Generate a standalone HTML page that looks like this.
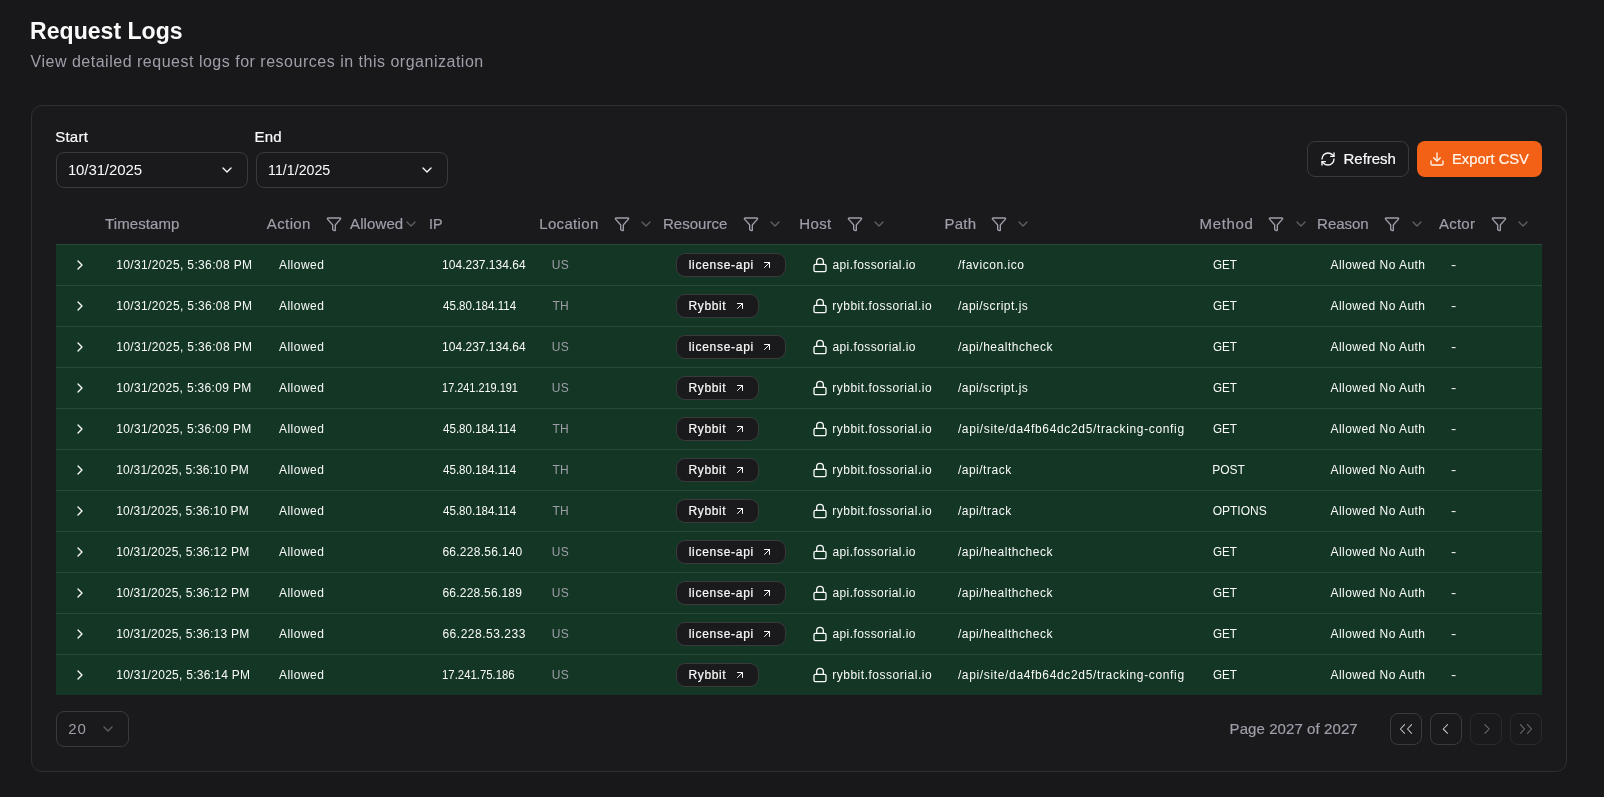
<!DOCTYPE html>
<html><head><meta charset="utf-8"><title>Request Logs</title>
<style>
html,body{margin:0;padding:0;}
body{width:1604px;height:797px;overflow:hidden;background:#18181b;position:relative;font-family:"Liberation Sans",sans-serif;}
.t{position:absolute;white-space:nowrap;}
.med{-webkit-text-stroke:0.2px currentColor;}
.layer{position:absolute;left:0;top:0;width:1604px;height:797px;will-change:transform;}
.ic{position:absolute;overflow:visible;}
.card{position:absolute;left:31px;top:105px;width:1534px;height:665px;border:1px solid #2f2f32;border-radius:11px;background:#1a1a1d;}
.inp{position:absolute;top:152px;width:190px;height:34px;border:1px solid #3a3a3d;border-radius:8px;}
.btn{position:absolute;top:141px;height:34px;border-radius:8px;}
.row{position:absolute;left:56px;width:1486px;height:40px;background:#133625;border-top:1px solid #284a38;}
.badge{position:absolute;box-sizing:border-box;height:24px;background:#1a1a1d;border:1px solid #3a3a3c;border-radius:9px;}
.pbtn{position:absolute;top:713px;width:30px;height:30px;border:1px solid #3a3a3d;border-radius:8px;}
</style></head><body><div class="layer">
<div class="card"></div>
<div class="inp" style="left:56px"></div>
<div class="inp" style="left:256px"></div>
<div class="btn" style="left:1307px;width:100px;border:1px solid #3a3a3d;"></div>
<div class="btn" style="left:1417px;width:125px;height:36px;background:#f36117;"></div>
<div class="row" style="top:244px"></div><div class="badge" style="left:676px;top:253px;width:110px"></div><div class="row" style="top:285px"></div><div class="badge" style="left:676px;top:294px;width:83px"></div><div class="row" style="top:326px"></div><div class="badge" style="left:676px;top:335px;width:110px"></div><div class="row" style="top:367px"></div><div class="badge" style="left:676px;top:376px;width:83px"></div><div class="row" style="top:408px"></div><div class="badge" style="left:676px;top:417px;width:83px"></div><div class="row" style="top:449px"></div><div class="badge" style="left:676px;top:458px;width:83px"></div><div class="row" style="top:490px"></div><div class="badge" style="left:676px;top:499px;width:83px"></div><div class="row" style="top:531px"></div><div class="badge" style="left:676px;top:540px;width:110px"></div><div class="row" style="top:572px"></div><div class="badge" style="left:676px;top:581px;width:110px"></div><div class="row" style="top:613px"></div><div class="badge" style="left:676px;top:622px;width:110px"></div><div class="row" style="top:654px"></div><div class="badge" style="left:676px;top:663px;width:83px"></div>
<div class="pbtn" style="left:56px;width:71px;height:34px;top:711px"></div>
<div class="pbtn" style="left:1390px;opacity:1"></div><div class="pbtn" style="left:1430px;opacity:1"></div><div class="pbtn" style="left:1470px;opacity:0.5"></div><div class="pbtn" style="left:1510px;opacity:0.5"></div>
<span class="t " style="left:30.25px;top:17px;font-size:24px;line-height:27px;letter-spacing:0.000px;color:#fafafa;font-weight:700;transform:scaleX(0.9612);transform-origin:1.55px 0;">Request Logs</span><span class="t " style="left:30.57px;top:53px;font-size:16px;line-height:17px;letter-spacing:0.508px;color:#9f9fa9;">View detailed request logs for resources in this organization</span><span class="t med " style="left:55.14px;top:128px;font-size:15px;line-height:17px;letter-spacing:0.281px;color:#fafafa;">Start</span><span class="t med " style="left:254.40px;top:128px;font-size:15px;line-height:17px;letter-spacing:0.278px;color:#fafafa;">End</span><span class="t " style="left:67.88px;top:161px;font-size:15px;line-height:17px;letter-spacing:-0.108px;color:#fafafa;">10/31/2025</span><span class="t " style="left:267.58px;top:161px;font-size:15px;line-height:17px;letter-spacing:0.000px;color:#fafafa;transform:scaleX(0.9480);transform-origin:1.12px 0;">11/1/2025</span><span class="t med " style="left:1343.50px;top:150px;font-size:15px;line-height:17px;letter-spacing:-0.012px;color:#fafafa;">Refresh</span><span class="t med " style="left:1452.20px;top:150px;font-size:15px;line-height:17px;letter-spacing:0.000px;color:#fff7ed;transform:scaleX(0.9811);transform-origin:1.20px 0;">Export CSV</span><span class="t med " style="left:105.00px;top:215px;font-size:15px;line-height:17px;letter-spacing:0.096px;color:#9f9fa9;">Timestamp</span><span class="t med " style="left:266.80px;top:215px;font-size:15px;line-height:17px;letter-spacing:0.386px;color:#9f9fa9;">Action</span><span class="t med " style="left:350.10px;top:215px;font-size:15px;line-height:17px;letter-spacing:0.093px;color:#9f9fa9;">Allowed</span><span class="t med " style="left:429.46px;top:215px;font-size:15px;line-height:17px;letter-spacing:0.000px;color:#9f9fa9;transform:scaleX(0.9595);transform-origin:1.34px 0;">IP</span><span class="t med " style="left:539.20px;top:215px;font-size:15px;line-height:17px;letter-spacing:0.346px;color:#9f9fa9;">Location</span><span class="t med " style="left:663.00px;top:215px;font-size:15px;line-height:17px;letter-spacing:0.008px;color:#9f9fa9;">Resource</span><span class="t med " style="left:799.30px;top:215px;font-size:15px;line-height:17px;letter-spacing:0.344px;color:#9f9fa9;">Host</span><span class="t med " style="left:944.60px;top:215px;font-size:15px;line-height:17px;letter-spacing:0.201px;color:#9f9fa9;">Path</span><span class="t med " style="left:1199.60px;top:215px;font-size:15px;line-height:17px;letter-spacing:0.653px;color:#9f9fa9;">Method</span><span class="t med " style="left:1317.10px;top:215px;font-size:15px;line-height:17px;letter-spacing:-0.035px;color:#9f9fa9;">Reason</span><span class="t med " style="left:1438.90px;top:215px;font-size:15px;line-height:17px;letter-spacing:0.255px;color:#9f9fa9;">Actor</span><span class="t med " style="left:1229.60px;top:720px;font-size:15px;line-height:17px;letter-spacing:0.079px;color:#9f9fa9;">Page 2027 of 2027</span><span class="t " style="left:68.31px;top:720px;font-size:15px;line-height:17px;letter-spacing:0.825px;color:#9f9fa9;">20</span>
<span class="t " style="left:116.22px;top:258px;font-size:12px;line-height:14px;letter-spacing:0.366px;color:#fafafa;">10/31/2025, 5:36:08 PM</span><span class="t " style="left:278.92px;top:258px;font-size:12px;line-height:14px;letter-spacing:0.503px;color:#fafafa;">Allowed</span><span class="t " style="left:442.12px;top:258px;font-size:12px;line-height:14px;letter-spacing:0.005px;color:#fafafa;">104.237.134.64</span><span class="t " style="left:551.82px;top:258px;font-size:12px;line-height:14px;letter-spacing:0.278px;color:#9f9fa9;">US</span><span class="t med " style="left:688.74px;top:258px;font-size:12px;line-height:14px;letter-spacing:0.709px;color:#fafafa;">license-api</span><span class="t " style="left:832.40px;top:258px;font-size:12px;line-height:14px;letter-spacing:0.421px;color:#fafafa;">api.fossorial.io</span><span class="t " style="left:957.89px;top:258px;font-size:12px;line-height:14px;letter-spacing:0.550px;color:#fafafa;">/favicon.ico</span><span class="t " style="left:1212.62px;top:258px;font-size:12px;line-height:14px;letter-spacing:0.000px;color:#fafafa;transform:scaleX(0.9706);transform-origin:0.58px 0;">GET</span><span class="t " style="left:1330.52px;top:258px;font-size:12px;line-height:14px;letter-spacing:0.459px;color:#fafafa;">Allowed No Auth</span><span class="t " style="left:1451.49px;top:258px;font-size:12px;line-height:14px;letter-spacing:0.000px;color:#fafafa;transform:scaleX(1.3);transform-origin:0 0;">-</span><span class="t " style="left:116.22px;top:299px;font-size:12px;line-height:14px;letter-spacing:0.366px;color:#fafafa;">10/31/2025, 5:36:08 PM</span><span class="t " style="left:278.92px;top:299px;font-size:12px;line-height:14px;letter-spacing:0.503px;color:#fafafa;">Allowed</span><span class="t " style="left:442.76px;top:299px;font-size:12px;line-height:14px;letter-spacing:0.000px;color:#fafafa;transform:scaleX(0.9643);transform-origin:0.24px 0;">45.80.184.114</span><span class="t " style="left:552.47px;top:299px;font-size:12px;line-height:14px;letter-spacing:0.278px;color:#9f9fa9;">TH</span><span class="t med " style="left:688.50px;top:299px;font-size:12px;line-height:14px;letter-spacing:0.624px;color:#fafafa;">Rybbit</span><span class="t " style="left:832.14px;top:299px;font-size:12px;line-height:14px;letter-spacing:0.528px;color:#fafafa;">rybbit.fossorial.io</span><span class="t " style="left:957.89px;top:299px;font-size:12px;line-height:14px;letter-spacing:0.511px;color:#fafafa;">/api/script.js</span><span class="t " style="left:1212.62px;top:299px;font-size:12px;line-height:14px;letter-spacing:0.000px;color:#fafafa;transform:scaleX(0.9706);transform-origin:0.58px 0;">GET</span><span class="t " style="left:1330.52px;top:299px;font-size:12px;line-height:14px;letter-spacing:0.459px;color:#fafafa;">Allowed No Auth</span><span class="t " style="left:1451.49px;top:299px;font-size:12px;line-height:14px;letter-spacing:0.000px;color:#fafafa;transform:scaleX(1.3);transform-origin:0 0;">-</span><span class="t " style="left:116.22px;top:340px;font-size:12px;line-height:14px;letter-spacing:0.366px;color:#fafafa;">10/31/2025, 5:36:08 PM</span><span class="t " style="left:278.92px;top:340px;font-size:12px;line-height:14px;letter-spacing:0.503px;color:#fafafa;">Allowed</span><span class="t " style="left:442.12px;top:340px;font-size:12px;line-height:14px;letter-spacing:0.005px;color:#fafafa;">104.237.134.64</span><span class="t " style="left:551.82px;top:340px;font-size:12px;line-height:14px;letter-spacing:0.278px;color:#9f9fa9;">US</span><span class="t med " style="left:688.74px;top:340px;font-size:12px;line-height:14px;letter-spacing:0.709px;color:#fafafa;">license-api</span><span class="t " style="left:832.40px;top:340px;font-size:12px;line-height:14px;letter-spacing:0.421px;color:#fafafa;">api.fossorial.io</span><span class="t " style="left:957.89px;top:340px;font-size:12px;line-height:14px;letter-spacing:0.521px;color:#fafafa;">/api/healthcheck</span><span class="t " style="left:1212.62px;top:340px;font-size:12px;line-height:14px;letter-spacing:0.000px;color:#fafafa;transform:scaleX(0.9706);transform-origin:0.58px 0;">GET</span><span class="t " style="left:1330.52px;top:340px;font-size:12px;line-height:14px;letter-spacing:0.459px;color:#fafafa;">Allowed No Auth</span><span class="t " style="left:1451.49px;top:340px;font-size:12px;line-height:14px;letter-spacing:0.000px;color:#fafafa;transform:scaleX(1.3);transform-origin:0 0;">-</span><span class="t " style="left:116.22px;top:381px;font-size:12px;line-height:14px;letter-spacing:0.328px;color:#fafafa;">10/31/2025, 5:36:09 PM</span><span class="t " style="left:278.92px;top:381px;font-size:12px;line-height:14px;letter-spacing:0.503px;color:#fafafa;">Allowed</span><span class="t " style="left:442.12px;top:381px;font-size:12px;line-height:14px;letter-spacing:0.000px;color:#fafafa;transform:scaleX(0.9087);transform-origin:0.88px 0;">17.241.219.191</span><span class="t " style="left:551.82px;top:381px;font-size:12px;line-height:14px;letter-spacing:0.278px;color:#9f9fa9;">US</span><span class="t med " style="left:688.50px;top:381px;font-size:12px;line-height:14px;letter-spacing:0.624px;color:#fafafa;">Rybbit</span><span class="t " style="left:832.14px;top:381px;font-size:12px;line-height:14px;letter-spacing:0.528px;color:#fafafa;">rybbit.fossorial.io</span><span class="t " style="left:957.89px;top:381px;font-size:12px;line-height:14px;letter-spacing:0.511px;color:#fafafa;">/api/script.js</span><span class="t " style="left:1212.62px;top:381px;font-size:12px;line-height:14px;letter-spacing:0.000px;color:#fafafa;transform:scaleX(0.9706);transform-origin:0.58px 0;">GET</span><span class="t " style="left:1330.52px;top:381px;font-size:12px;line-height:14px;letter-spacing:0.459px;color:#fafafa;">Allowed No Auth</span><span class="t " style="left:1451.49px;top:381px;font-size:12px;line-height:14px;letter-spacing:0.000px;color:#fafafa;transform:scaleX(1.3);transform-origin:0 0;">-</span><span class="t " style="left:116.22px;top:422px;font-size:12px;line-height:14px;letter-spacing:0.328px;color:#fafafa;">10/31/2025, 5:36:09 PM</span><span class="t " style="left:278.92px;top:422px;font-size:12px;line-height:14px;letter-spacing:0.503px;color:#fafafa;">Allowed</span><span class="t " style="left:442.76px;top:422px;font-size:12px;line-height:14px;letter-spacing:0.000px;color:#fafafa;transform:scaleX(0.9643);transform-origin:0.24px 0;">45.80.184.114</span><span class="t " style="left:552.47px;top:422px;font-size:12px;line-height:14px;letter-spacing:0.278px;color:#9f9fa9;">TH</span><span class="t med " style="left:688.50px;top:422px;font-size:12px;line-height:14px;letter-spacing:0.624px;color:#fafafa;">Rybbit</span><span class="t " style="left:832.14px;top:422px;font-size:12px;line-height:14px;letter-spacing:0.528px;color:#fafafa;">rybbit.fossorial.io</span><span class="t " style="left:957.89px;top:422px;font-size:12px;line-height:14px;letter-spacing:0.651px;color:#fafafa;">/api/site/da4fb64dc2d5/tracking-config</span><span class="t " style="left:1212.62px;top:422px;font-size:12px;line-height:14px;letter-spacing:0.000px;color:#fafafa;transform:scaleX(0.9706);transform-origin:0.58px 0;">GET</span><span class="t " style="left:1330.52px;top:422px;font-size:12px;line-height:14px;letter-spacing:0.459px;color:#fafafa;">Allowed No Auth</span><span class="t " style="left:1451.49px;top:422px;font-size:12px;line-height:14px;letter-spacing:0.000px;color:#fafafa;transform:scaleX(1.3);transform-origin:0 0;">-</span><span class="t " style="left:116.22px;top:463px;font-size:12px;line-height:14px;letter-spacing:0.213px;color:#fafafa;">10/31/2025, 5:36:10 PM</span><span class="t " style="left:278.92px;top:463px;font-size:12px;line-height:14px;letter-spacing:0.503px;color:#fafafa;">Allowed</span><span class="t " style="left:442.76px;top:463px;font-size:12px;line-height:14px;letter-spacing:0.000px;color:#fafafa;transform:scaleX(0.9643);transform-origin:0.24px 0;">45.80.184.114</span><span class="t " style="left:552.47px;top:463px;font-size:12px;line-height:14px;letter-spacing:0.278px;color:#9f9fa9;">TH</span><span class="t med " style="left:688.50px;top:463px;font-size:12px;line-height:14px;letter-spacing:0.624px;color:#fafafa;">Rybbit</span><span class="t " style="left:832.14px;top:463px;font-size:12px;line-height:14px;letter-spacing:0.528px;color:#fafafa;">rybbit.fossorial.io</span><span class="t " style="left:957.89px;top:463px;font-size:12px;line-height:14px;letter-spacing:0.513px;color:#fafafa;">/api/track</span><span class="t " style="left:1212.20px;top:463px;font-size:12px;line-height:14px;letter-spacing:0.008px;color:#fafafa;">POST</span><span class="t " style="left:1330.52px;top:463px;font-size:12px;line-height:14px;letter-spacing:0.459px;color:#fafafa;">Allowed No Auth</span><span class="t " style="left:1451.49px;top:463px;font-size:12px;line-height:14px;letter-spacing:0.000px;color:#fafafa;transform:scaleX(1.3);transform-origin:0 0;">-</span><span class="t " style="left:116.22px;top:504px;font-size:12px;line-height:14px;letter-spacing:0.213px;color:#fafafa;">10/31/2025, 5:36:10 PM</span><span class="t " style="left:278.92px;top:504px;font-size:12px;line-height:14px;letter-spacing:0.503px;color:#fafafa;">Allowed</span><span class="t " style="left:442.76px;top:504px;font-size:12px;line-height:14px;letter-spacing:0.000px;color:#fafafa;transform:scaleX(0.9643);transform-origin:0.24px 0;">45.80.184.114</span><span class="t " style="left:552.47px;top:504px;font-size:12px;line-height:14px;letter-spacing:0.278px;color:#9f9fa9;">TH</span><span class="t med " style="left:688.50px;top:504px;font-size:12px;line-height:14px;letter-spacing:0.624px;color:#fafafa;">Rybbit</span><span class="t " style="left:832.14px;top:504px;font-size:12px;line-height:14px;letter-spacing:0.528px;color:#fafafa;">rybbit.fossorial.io</span><span class="t " style="left:957.89px;top:504px;font-size:12px;line-height:14px;letter-spacing:0.513px;color:#fafafa;">/api/track</span><span class="t " style="left:1212.67px;top:504px;font-size:12px;line-height:14px;letter-spacing:0.010px;color:#fafafa;">OPTIONS</span><span class="t " style="left:1330.52px;top:504px;font-size:12px;line-height:14px;letter-spacing:0.459px;color:#fafafa;">Allowed No Auth</span><span class="t " style="left:1451.49px;top:504px;font-size:12px;line-height:14px;letter-spacing:0.000px;color:#fafafa;transform:scaleX(1.3);transform-origin:0 0;">-</span><span class="t " style="left:116.22px;top:545px;font-size:12px;line-height:14px;letter-spacing:0.232px;color:#fafafa;">10/31/2025, 5:36:12 PM</span><span class="t " style="left:278.92px;top:545px;font-size:12px;line-height:14px;letter-spacing:0.503px;color:#fafafa;">Allowed</span><span class="t " style="left:442.42px;top:545px;font-size:12px;line-height:14px;letter-spacing:0.262px;color:#fafafa;">66.228.56.140</span><span class="t " style="left:551.82px;top:545px;font-size:12px;line-height:14px;letter-spacing:0.278px;color:#9f9fa9;">US</span><span class="t med " style="left:688.74px;top:545px;font-size:12px;line-height:14px;letter-spacing:0.709px;color:#fafafa;">license-api</span><span class="t " style="left:832.40px;top:545px;font-size:12px;line-height:14px;letter-spacing:0.421px;color:#fafafa;">api.fossorial.io</span><span class="t " style="left:957.89px;top:545px;font-size:12px;line-height:14px;letter-spacing:0.521px;color:#fafafa;">/api/healthcheck</span><span class="t " style="left:1212.62px;top:545px;font-size:12px;line-height:14px;letter-spacing:0.000px;color:#fafafa;transform:scaleX(0.9706);transform-origin:0.58px 0;">GET</span><span class="t " style="left:1330.52px;top:545px;font-size:12px;line-height:14px;letter-spacing:0.459px;color:#fafafa;">Allowed No Auth</span><span class="t " style="left:1451.49px;top:545px;font-size:12px;line-height:14px;letter-spacing:0.000px;color:#fafafa;transform:scaleX(1.3);transform-origin:0 0;">-</span><span class="t " style="left:116.22px;top:586px;font-size:12px;line-height:14px;letter-spacing:0.232px;color:#fafafa;">10/31/2025, 5:36:12 PM</span><span class="t " style="left:278.92px;top:586px;font-size:12px;line-height:14px;letter-spacing:0.503px;color:#fafafa;">Allowed</span><span class="t " style="left:442.42px;top:586px;font-size:12px;line-height:14px;letter-spacing:0.232px;color:#fafafa;">66.228.56.189</span><span class="t " style="left:551.82px;top:586px;font-size:12px;line-height:14px;letter-spacing:0.278px;color:#9f9fa9;">US</span><span class="t med " style="left:688.74px;top:586px;font-size:12px;line-height:14px;letter-spacing:0.709px;color:#fafafa;">license-api</span><span class="t " style="left:832.40px;top:586px;font-size:12px;line-height:14px;letter-spacing:0.421px;color:#fafafa;">api.fossorial.io</span><span class="t " style="left:957.89px;top:586px;font-size:12px;line-height:14px;letter-spacing:0.521px;color:#fafafa;">/api/healthcheck</span><span class="t " style="left:1212.62px;top:586px;font-size:12px;line-height:14px;letter-spacing:0.000px;color:#fafafa;transform:scaleX(0.9706);transform-origin:0.58px 0;">GET</span><span class="t " style="left:1330.52px;top:586px;font-size:12px;line-height:14px;letter-spacing:0.459px;color:#fafafa;">Allowed No Auth</span><span class="t " style="left:1451.49px;top:586px;font-size:12px;line-height:14px;letter-spacing:0.000px;color:#fafafa;transform:scaleX(1.3);transform-origin:0 0;">-</span><span class="t " style="left:116.22px;top:627px;font-size:12px;line-height:14px;letter-spacing:0.232px;color:#fafafa;">10/31/2025, 5:36:13 PM</span><span class="t " style="left:278.92px;top:627px;font-size:12px;line-height:14px;letter-spacing:0.503px;color:#fafafa;">Allowed</span><span class="t " style="left:442.42px;top:627px;font-size:12px;line-height:14px;letter-spacing:0.513px;color:#fafafa;">66.228.53.233</span><span class="t " style="left:551.82px;top:627px;font-size:12px;line-height:14px;letter-spacing:0.278px;color:#9f9fa9;">US</span><span class="t med " style="left:688.74px;top:627px;font-size:12px;line-height:14px;letter-spacing:0.709px;color:#fafafa;">license-api</span><span class="t " style="left:832.40px;top:627px;font-size:12px;line-height:14px;letter-spacing:0.421px;color:#fafafa;">api.fossorial.io</span><span class="t " style="left:957.89px;top:627px;font-size:12px;line-height:14px;letter-spacing:0.521px;color:#fafafa;">/api/healthcheck</span><span class="t " style="left:1212.62px;top:627px;font-size:12px;line-height:14px;letter-spacing:0.000px;color:#fafafa;transform:scaleX(0.9706);transform-origin:0.58px 0;">GET</span><span class="t " style="left:1330.52px;top:627px;font-size:12px;line-height:14px;letter-spacing:0.459px;color:#fafafa;">Allowed No Auth</span><span class="t " style="left:1451.49px;top:627px;font-size:12px;line-height:14px;letter-spacing:0.000px;color:#fafafa;transform:scaleX(1.3);transform-origin:0 0;">-</span><span class="t " style="left:116.22px;top:668px;font-size:12px;line-height:14px;letter-spacing:0.275px;color:#fafafa;">10/31/2025, 5:36:14 PM</span><span class="t " style="left:278.92px;top:668px;font-size:12px;line-height:14px;letter-spacing:0.503px;color:#fafafa;">Allowed</span><span class="t " style="left:442.12px;top:668px;font-size:12px;line-height:14px;letter-spacing:0.000px;color:#fafafa;transform:scaleX(0.9453);transform-origin:0.88px 0;">17.241.75.186</span><span class="t " style="left:551.82px;top:668px;font-size:12px;line-height:14px;letter-spacing:0.278px;color:#9f9fa9;">US</span><span class="t med " style="left:688.50px;top:668px;font-size:12px;line-height:14px;letter-spacing:0.624px;color:#fafafa;">Rybbit</span><span class="t " style="left:832.14px;top:668px;font-size:12px;line-height:14px;letter-spacing:0.528px;color:#fafafa;">rybbit.fossorial.io</span><span class="t " style="left:957.89px;top:668px;font-size:12px;line-height:14px;letter-spacing:0.651px;color:#fafafa;">/api/site/da4fb64dc2d5/tracking-config</span><span class="t " style="left:1212.62px;top:668px;font-size:12px;line-height:14px;letter-spacing:0.000px;color:#fafafa;transform:scaleX(0.9706);transform-origin:0.58px 0;">GET</span><span class="t " style="left:1330.52px;top:668px;font-size:12px;line-height:14px;letter-spacing:0.459px;color:#fafafa;">Allowed No Auth</span><span class="t " style="left:1451.49px;top:668px;font-size:12px;line-height:14px;letter-spacing:0.000px;color:#fafafa;transform:scaleX(1.3);transform-origin:0 0;">-</span>
<svg class="ic" style="left:219.30px;top:162.00px;opacity:1" width="16" height="16" viewBox="0 0 24 24" fill="none" stroke="#fafafa" stroke-width="2" stroke-linecap="round" stroke-linejoin="round"><path d="m6 9 6 6 6-6"/></svg><svg class="ic" style="left:419.30px;top:162.00px;opacity:1" width="16" height="16" viewBox="0 0 24 24" fill="none" stroke="#fafafa" stroke-width="2" stroke-linecap="round" stroke-linejoin="round"><path d="m6 9 6 6 6-6"/></svg><svg class="ic" style="left:1320.00px;top:151.00px;opacity:1" width="16" height="16" viewBox="0 0 24 24" fill="none" stroke="#fafafa" stroke-width="2" stroke-linecap="round" stroke-linejoin="round"><path d="M3 12a9 9 0 0 1 9-9 9.75 9.75 0 0 1 6.74 2.74L21 8"/><path d="M21 3v5h-5"/><path d="M21 12a9 9 0 0 1-9 9 9.75 9.75 0 0 1-6.74-2.74L3 16"/><path d="M8 16H3v5"/></svg><svg class="ic" style="left:1429.00px;top:151.00px;opacity:1" width="16" height="16" viewBox="0 0 24 24" fill="none" stroke="#fff7ed" stroke-width="2" stroke-linecap="round" stroke-linejoin="round"><path d="M21 15v4a2 2 0 0 1-2 2H5a2 2 0 0 1-2-2v-4"/><path d="m7 10 5 5 5-5"/><path d="M12 15V3"/></svg><svg class="ic" style="left:326.30px;top:216.00px;opacity:1" width="16" height="16" viewBox="0 0 24 24" fill="none" stroke="#9f9fa9" stroke-width="2" stroke-linecap="round" stroke-linejoin="round"><path d="M10 20a1 1 0 0 0 .553.895l2 1A1 1 0 0 0 14 21v-7a2 2 0 0 1 .517-1.341L21.74 4.67A1 1 0 0 0 21 3H3a1 1 0 0 0-.742 1.67l7.225 7.989A2 2 0 0 1 10 14z"/></svg><svg class="ic" style="left:614.00px;top:216.00px;opacity:1" width="16" height="16" viewBox="0 0 24 24" fill="none" stroke="#9f9fa9" stroke-width="2" stroke-linecap="round" stroke-linejoin="round"><path d="M10 20a1 1 0 0 0 .553.895l2 1A1 1 0 0 0 14 21v-7a2 2 0 0 1 .517-1.341L21.74 4.67A1 1 0 0 0 21 3H3a1 1 0 0 0-.742 1.67l7.225 7.989A2 2 0 0 1 10 14z"/></svg><svg class="ic" style="left:743.10px;top:216.00px;opacity:1" width="16" height="16" viewBox="0 0 24 24" fill="none" stroke="#9f9fa9" stroke-width="2" stroke-linecap="round" stroke-linejoin="round"><path d="M10 20a1 1 0 0 0 .553.895l2 1A1 1 0 0 0 14 21v-7a2 2 0 0 1 .517-1.341L21.74 4.67A1 1 0 0 0 21 3H3a1 1 0 0 0-.742 1.67l7.225 7.989A2 2 0 0 1 10 14z"/></svg><svg class="ic" style="left:846.90px;top:216.00px;opacity:1" width="16" height="16" viewBox="0 0 24 24" fill="none" stroke="#9f9fa9" stroke-width="2" stroke-linecap="round" stroke-linejoin="round"><path d="M10 20a1 1 0 0 0 .553.895l2 1A1 1 0 0 0 14 21v-7a2 2 0 0 1 .517-1.341L21.74 4.67A1 1 0 0 0 21 3H3a1 1 0 0 0-.742 1.67l7.225 7.989A2 2 0 0 1 10 14z"/></svg><svg class="ic" style="left:990.90px;top:216.00px;opacity:1" width="16" height="16" viewBox="0 0 24 24" fill="none" stroke="#9f9fa9" stroke-width="2" stroke-linecap="round" stroke-linejoin="round"><path d="M10 20a1 1 0 0 0 .553.895l2 1A1 1 0 0 0 14 21v-7a2 2 0 0 1 .517-1.341L21.74 4.67A1 1 0 0 0 21 3H3a1 1 0 0 0-.742 1.67l7.225 7.989A2 2 0 0 1 10 14z"/></svg><svg class="ic" style="left:1268.00px;top:216.00px;opacity:1" width="16" height="16" viewBox="0 0 24 24" fill="none" stroke="#9f9fa9" stroke-width="2" stroke-linecap="round" stroke-linejoin="round"><path d="M10 20a1 1 0 0 0 .553.895l2 1A1 1 0 0 0 14 21v-7a2 2 0 0 1 .517-1.341L21.74 4.67A1 1 0 0 0 21 3H3a1 1 0 0 0-.742 1.67l7.225 7.989A2 2 0 0 1 10 14z"/></svg><svg class="ic" style="left:1384.20px;top:216.00px;opacity:1" width="16" height="16" viewBox="0 0 24 24" fill="none" stroke="#9f9fa9" stroke-width="2" stroke-linecap="round" stroke-linejoin="round"><path d="M10 20a1 1 0 0 0 .553.895l2 1A1 1 0 0 0 14 21v-7a2 2 0 0 1 .517-1.341L21.74 4.67A1 1 0 0 0 21 3H3a1 1 0 0 0-.742 1.67l7.225 7.989A2 2 0 0 1 10 14z"/></svg><svg class="ic" style="left:1491.30px;top:216.00px;opacity:1" width="16" height="16" viewBox="0 0 24 24" fill="none" stroke="#9f9fa9" stroke-width="2" stroke-linecap="round" stroke-linejoin="round"><path d="M10 20a1 1 0 0 0 .553.895l2 1A1 1 0 0 0 14 21v-7a2 2 0 0 1 .517-1.341L21.74 4.67A1 1 0 0 0 21 3H3a1 1 0 0 0-.742 1.67l7.225 7.989A2 2 0 0 1 10 14z"/></svg><svg class="ic" style="left:637.70px;top:215.70px;opacity:0.5" width="16" height="16" viewBox="0 0 24 24" fill="none" stroke="#9f9fa9" stroke-width="2" stroke-linecap="round" stroke-linejoin="round"><path d="m6 9 6 6 6-6"/></svg><svg class="ic" style="left:767.10px;top:215.70px;opacity:0.5" width="16" height="16" viewBox="0 0 24 24" fill="none" stroke="#9f9fa9" stroke-width="2" stroke-linecap="round" stroke-linejoin="round"><path d="m6 9 6 6 6-6"/></svg><svg class="ic" style="left:871.00px;top:215.70px;opacity:0.5" width="16" height="16" viewBox="0 0 24 24" fill="none" stroke="#9f9fa9" stroke-width="2" stroke-linecap="round" stroke-linejoin="round"><path d="m6 9 6 6 6-6"/></svg><svg class="ic" style="left:1015.00px;top:215.70px;opacity:0.5" width="16" height="16" viewBox="0 0 24 24" fill="none" stroke="#9f9fa9" stroke-width="2" stroke-linecap="round" stroke-linejoin="round"><path d="m6 9 6 6 6-6"/></svg><svg class="ic" style="left:1292.50px;top:215.70px;opacity:0.5" width="16" height="16" viewBox="0 0 24 24" fill="none" stroke="#9f9fa9" stroke-width="2" stroke-linecap="round" stroke-linejoin="round"><path d="m6 9 6 6 6-6"/></svg><svg class="ic" style="left:1408.70px;top:215.70px;opacity:0.5" width="16" height="16" viewBox="0 0 24 24" fill="none" stroke="#9f9fa9" stroke-width="2" stroke-linecap="round" stroke-linejoin="round"><path d="m6 9 6 6 6-6"/></svg><svg class="ic" style="left:1515.30px;top:215.70px;opacity:0.5" width="16" height="16" viewBox="0 0 24 24" fill="none" stroke="#9f9fa9" stroke-width="2" stroke-linecap="round" stroke-linejoin="round"><path d="m6 9 6 6 6-6"/></svg><svg class="ic" style="left:403.20px;top:215.70px;opacity:0.5" width="16" height="16" viewBox="0 0 24 24" fill="none" stroke="#9f9fa9" stroke-width="2" stroke-linecap="round" stroke-linejoin="round"><path d="m6 9 6 6 6-6"/></svg><svg class="ic" style="left:100.40px;top:721.00px;opacity:0.5" width="16" height="16" viewBox="0 0 24 24" fill="none" stroke="#9f9fa9" stroke-width="2" stroke-linecap="round" stroke-linejoin="round"><path d="m6 9 6 6 6-6"/></svg><svg class="ic" style="left:72.20px;top:257.20px;opacity:1" width="16" height="16" viewBox="0 0 24 24" fill="none" stroke="#fafafa" stroke-width="2" stroke-linecap="round" stroke-linejoin="round"><path d="m9 18 6-6-6-6"/></svg><svg class="ic" style="left:760.60px;top:258.80px;opacity:1" width="12" height="12" viewBox="0 0 24 24" fill="none" stroke="#fafafa" stroke-width="2" stroke-linecap="round" stroke-linejoin="round"><path d="M7 7h10v10"/><path d="M7 17 17 7"/></svg><svg class="ic" style="left:812.00px;top:257.00px;opacity:1" width="16" height="16" viewBox="0 0 24 24" fill="none" stroke="#fafafa" stroke-width="2" stroke-linecap="round" stroke-linejoin="round"><rect width="18" height="11" x="3" y="11" rx="2" ry="2"/><path d="M7 11V7a5 5 0 0 1 10 0v4"/></svg><svg class="ic" style="left:72.20px;top:298.20px;opacity:1" width="16" height="16" viewBox="0 0 24 24" fill="none" stroke="#fafafa" stroke-width="2" stroke-linecap="round" stroke-linejoin="round"><path d="m9 18 6-6-6-6"/></svg><svg class="ic" style="left:733.70px;top:299.80px;opacity:1" width="12" height="12" viewBox="0 0 24 24" fill="none" stroke="#fafafa" stroke-width="2" stroke-linecap="round" stroke-linejoin="round"><path d="M7 7h10v10"/><path d="M7 17 17 7"/></svg><svg class="ic" style="left:812.00px;top:298.00px;opacity:1" width="16" height="16" viewBox="0 0 24 24" fill="none" stroke="#fafafa" stroke-width="2" stroke-linecap="round" stroke-linejoin="round"><rect width="18" height="11" x="3" y="11" rx="2" ry="2"/><path d="M7 11V7a5 5 0 0 1 10 0v4"/></svg><svg class="ic" style="left:72.20px;top:339.20px;opacity:1" width="16" height="16" viewBox="0 0 24 24" fill="none" stroke="#fafafa" stroke-width="2" stroke-linecap="round" stroke-linejoin="round"><path d="m9 18 6-6-6-6"/></svg><svg class="ic" style="left:760.60px;top:340.80px;opacity:1" width="12" height="12" viewBox="0 0 24 24" fill="none" stroke="#fafafa" stroke-width="2" stroke-linecap="round" stroke-linejoin="round"><path d="M7 7h10v10"/><path d="M7 17 17 7"/></svg><svg class="ic" style="left:812.00px;top:339.00px;opacity:1" width="16" height="16" viewBox="0 0 24 24" fill="none" stroke="#fafafa" stroke-width="2" stroke-linecap="round" stroke-linejoin="round"><rect width="18" height="11" x="3" y="11" rx="2" ry="2"/><path d="M7 11V7a5 5 0 0 1 10 0v4"/></svg><svg class="ic" style="left:72.20px;top:380.20px;opacity:1" width="16" height="16" viewBox="0 0 24 24" fill="none" stroke="#fafafa" stroke-width="2" stroke-linecap="round" stroke-linejoin="round"><path d="m9 18 6-6-6-6"/></svg><svg class="ic" style="left:733.70px;top:381.80px;opacity:1" width="12" height="12" viewBox="0 0 24 24" fill="none" stroke="#fafafa" stroke-width="2" stroke-linecap="round" stroke-linejoin="round"><path d="M7 7h10v10"/><path d="M7 17 17 7"/></svg><svg class="ic" style="left:812.00px;top:380.00px;opacity:1" width="16" height="16" viewBox="0 0 24 24" fill="none" stroke="#fafafa" stroke-width="2" stroke-linecap="round" stroke-linejoin="round"><rect width="18" height="11" x="3" y="11" rx="2" ry="2"/><path d="M7 11V7a5 5 0 0 1 10 0v4"/></svg><svg class="ic" style="left:72.20px;top:421.20px;opacity:1" width="16" height="16" viewBox="0 0 24 24" fill="none" stroke="#fafafa" stroke-width="2" stroke-linecap="round" stroke-linejoin="round"><path d="m9 18 6-6-6-6"/></svg><svg class="ic" style="left:733.70px;top:422.80px;opacity:1" width="12" height="12" viewBox="0 0 24 24" fill="none" stroke="#fafafa" stroke-width="2" stroke-linecap="round" stroke-linejoin="round"><path d="M7 7h10v10"/><path d="M7 17 17 7"/></svg><svg class="ic" style="left:812.00px;top:421.00px;opacity:1" width="16" height="16" viewBox="0 0 24 24" fill="none" stroke="#fafafa" stroke-width="2" stroke-linecap="round" stroke-linejoin="round"><rect width="18" height="11" x="3" y="11" rx="2" ry="2"/><path d="M7 11V7a5 5 0 0 1 10 0v4"/></svg><svg class="ic" style="left:72.20px;top:462.20px;opacity:1" width="16" height="16" viewBox="0 0 24 24" fill="none" stroke="#fafafa" stroke-width="2" stroke-linecap="round" stroke-linejoin="round"><path d="m9 18 6-6-6-6"/></svg><svg class="ic" style="left:733.70px;top:463.80px;opacity:1" width="12" height="12" viewBox="0 0 24 24" fill="none" stroke="#fafafa" stroke-width="2" stroke-linecap="round" stroke-linejoin="round"><path d="M7 7h10v10"/><path d="M7 17 17 7"/></svg><svg class="ic" style="left:812.00px;top:462.00px;opacity:1" width="16" height="16" viewBox="0 0 24 24" fill="none" stroke="#fafafa" stroke-width="2" stroke-linecap="round" stroke-linejoin="round"><rect width="18" height="11" x="3" y="11" rx="2" ry="2"/><path d="M7 11V7a5 5 0 0 1 10 0v4"/></svg><svg class="ic" style="left:72.20px;top:503.20px;opacity:1" width="16" height="16" viewBox="0 0 24 24" fill="none" stroke="#fafafa" stroke-width="2" stroke-linecap="round" stroke-linejoin="round"><path d="m9 18 6-6-6-6"/></svg><svg class="ic" style="left:733.70px;top:504.80px;opacity:1" width="12" height="12" viewBox="0 0 24 24" fill="none" stroke="#fafafa" stroke-width="2" stroke-linecap="round" stroke-linejoin="round"><path d="M7 7h10v10"/><path d="M7 17 17 7"/></svg><svg class="ic" style="left:812.00px;top:503.00px;opacity:1" width="16" height="16" viewBox="0 0 24 24" fill="none" stroke="#fafafa" stroke-width="2" stroke-linecap="round" stroke-linejoin="round"><rect width="18" height="11" x="3" y="11" rx="2" ry="2"/><path d="M7 11V7a5 5 0 0 1 10 0v4"/></svg><svg class="ic" style="left:72.20px;top:544.20px;opacity:1" width="16" height="16" viewBox="0 0 24 24" fill="none" stroke="#fafafa" stroke-width="2" stroke-linecap="round" stroke-linejoin="round"><path d="m9 18 6-6-6-6"/></svg><svg class="ic" style="left:760.60px;top:545.80px;opacity:1" width="12" height="12" viewBox="0 0 24 24" fill="none" stroke="#fafafa" stroke-width="2" stroke-linecap="round" stroke-linejoin="round"><path d="M7 7h10v10"/><path d="M7 17 17 7"/></svg><svg class="ic" style="left:812.00px;top:544.00px;opacity:1" width="16" height="16" viewBox="0 0 24 24" fill="none" stroke="#fafafa" stroke-width="2" stroke-linecap="round" stroke-linejoin="round"><rect width="18" height="11" x="3" y="11" rx="2" ry="2"/><path d="M7 11V7a5 5 0 0 1 10 0v4"/></svg><svg class="ic" style="left:72.20px;top:585.20px;opacity:1" width="16" height="16" viewBox="0 0 24 24" fill="none" stroke="#fafafa" stroke-width="2" stroke-linecap="round" stroke-linejoin="round"><path d="m9 18 6-6-6-6"/></svg><svg class="ic" style="left:760.60px;top:586.80px;opacity:1" width="12" height="12" viewBox="0 0 24 24" fill="none" stroke="#fafafa" stroke-width="2" stroke-linecap="round" stroke-linejoin="round"><path d="M7 7h10v10"/><path d="M7 17 17 7"/></svg><svg class="ic" style="left:812.00px;top:585.00px;opacity:1" width="16" height="16" viewBox="0 0 24 24" fill="none" stroke="#fafafa" stroke-width="2" stroke-linecap="round" stroke-linejoin="round"><rect width="18" height="11" x="3" y="11" rx="2" ry="2"/><path d="M7 11V7a5 5 0 0 1 10 0v4"/></svg><svg class="ic" style="left:72.20px;top:626.20px;opacity:1" width="16" height="16" viewBox="0 0 24 24" fill="none" stroke="#fafafa" stroke-width="2" stroke-linecap="round" stroke-linejoin="round"><path d="m9 18 6-6-6-6"/></svg><svg class="ic" style="left:760.60px;top:627.80px;opacity:1" width="12" height="12" viewBox="0 0 24 24" fill="none" stroke="#fafafa" stroke-width="2" stroke-linecap="round" stroke-linejoin="round"><path d="M7 7h10v10"/><path d="M7 17 17 7"/></svg><svg class="ic" style="left:812.00px;top:626.00px;opacity:1" width="16" height="16" viewBox="0 0 24 24" fill="none" stroke="#fafafa" stroke-width="2" stroke-linecap="round" stroke-linejoin="round"><rect width="18" height="11" x="3" y="11" rx="2" ry="2"/><path d="M7 11V7a5 5 0 0 1 10 0v4"/></svg><svg class="ic" style="left:72.20px;top:667.20px;opacity:1" width="16" height="16" viewBox="0 0 24 24" fill="none" stroke="#fafafa" stroke-width="2" stroke-linecap="round" stroke-linejoin="round"><path d="m9 18 6-6-6-6"/></svg><svg class="ic" style="left:733.70px;top:668.80px;opacity:1" width="12" height="12" viewBox="0 0 24 24" fill="none" stroke="#fafafa" stroke-width="2" stroke-linecap="round" stroke-linejoin="round"><path d="M7 7h10v10"/><path d="M7 17 17 7"/></svg><svg class="ic" style="left:812.00px;top:667.00px;opacity:1" width="16" height="16" viewBox="0 0 24 24" fill="none" stroke="#fafafa" stroke-width="2" stroke-linecap="round" stroke-linejoin="round"><rect width="18" height="11" x="3" y="11" rx="2" ry="2"/><path d="M7 11V7a5 5 0 0 1 10 0v4"/></svg>
<svg class="ic" style="left:0;top:0;opacity:1" width="1604" height="797" fill="none" stroke="#c4c4c9" stroke-width="1.05" stroke-linecap="round" stroke-linejoin="round"><polyline points="1404.6,724.6 1400.4,729 1404.6,733.3"/><polyline points="1411.6,724.6 1407.5,729 1411.6,733.3"/><polyline points="1447.6,724.6 1443.2,729 1447.6,733.3"/></svg><svg class="ic" style="left:0;top:0;opacity:0.5" width="1604" height="797" fill="none" stroke="#c4c4c9" stroke-width="1.05" stroke-linecap="round" stroke-linejoin="round"><polyline points="1484.9,724.6 1489.2,729 1484.9,733.3"/><polyline points="1520.4,724.6 1524.6,729 1520.4,733.3"/><polyline points="1527.4,724.6 1531.6,729 1527.4,733.3"/></svg>
</div></body></html>
